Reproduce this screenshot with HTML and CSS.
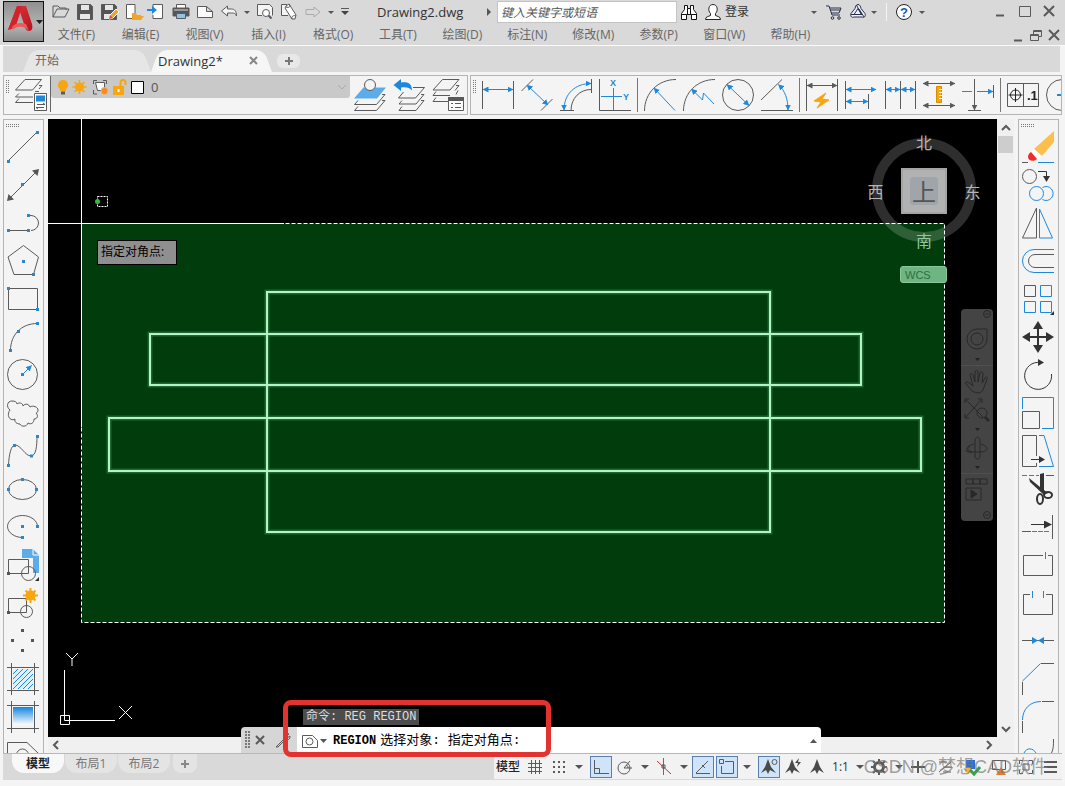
FILE: index.html
```html
<!DOCTYPE html>
<html lang="zh-CN">
<head>
<meta charset="utf-8">
<title>Drawing2.dwg</title>
<link rel="stylesheet" href="styles.css">
</head>
<body>
<svg class="defs" aria-hidden="true">
  <defs>
    <marker id="ab" viewBox="0 0 6 6" refX="5.5" refY="3" markerWidth="6" markerHeight="6" markerUnits="userSpaceOnUse" orient="auto-start-reverse"><path d="M0 0L6 3L0 6Z" fill="#1e88dc" stroke="none"/></marker>
    <marker id="ag" viewBox="0 0 6 6" refX="5.5" refY="3" markerWidth="6" markerHeight="6" markerUnits="userSpaceOnUse" orient="auto-start-reverse"><path d="M0 0L6 3L0 6Z" fill="#5a5a5a" stroke="none"/></marker>
    <marker id="ak" viewBox="0 0 8 8" refX="7" refY="4" markerWidth="8" markerHeight="8" markerUnits="userSpaceOnUse" orient="auto-start-reverse"><path d="M0 0L8 4L0 8Z" fill="#333" stroke="none"/></marker>
    <linearGradient id="fade" x1="0" y1="0" x2="0" y2="1"><stop offset="0" stop-color="#1484de"/><stop offset="1" stop-color="#fff"/></linearGradient>
    <linearGradient id="logo" x1="0" y1="0" x2="1" y2="1"><stop offset="0" stop-color="#e8333a"/><stop offset="1" stop-color="#b3161f"/></linearGradient>
  </defs>
</svg>

<header class="head">
  <button class="app" aria-label="应用程序菜单">
    <svg width="38" height="38" viewBox="0 0 38 38"><g stroke="none"><path d="M12 3h9l6 18c1 4 0 7-3 7-3 0-4-3-5-7l-4-12-5 16-7 2z" fill="url(#logo)"/><path d="M3 27L12 3h5l-6 20z" fill="#d2232b"/><path d="M7 24c3-4 9-5 14-3l3 7c-5-5-11-6-17-1z" fill="#ec5a58"/><path d="M31 17h7l-3.500 4z" fill="#222"/></g></svg>
  </button>
  <div class="head-rows">
    <div class="title-row">
      <div class="quick">
        <button class="q" aria-label="打开"><svg width="24" height="24" viewBox="0 0 24 24"><path d="M4 17V6h5l2 2h6v2M4 17h12l4-8H8z"/></svg></button>
        <button class="q" aria-label="保存"><svg width="24" height="24" viewBox="0 0 24 24"><path d="M4.500 4.500h13l2 2v13h-15z" fill="#555"/><path d="M8 5h8v5H8zM7 14h10v5H7z" fill="#e6e6e6" stroke="none"/></svg></button>
        <button class="q" aria-label="另存为"><svg width="24" height="24" viewBox="0 0 24 24"><path d="M4.500 4.500h13l2 2v13h-15z" fill="#555"/><path d="M8 5h8v5H8zM7 14h6v5H7z" fill="#e6e6e6" stroke="none"/><path d="M12 19l1-4 6-6 3 3-6 6z" fill="#f0a62c" stroke="#fff"/><path d="M12 19l1-4 3 3z" fill="#e0463c" stroke="none"/></svg></button>
        <button class="q" aria-label="从移动端打开"><svg width="24" height="24" viewBox="0 0 24 24"><path d="M14 13V4.500H5.500v14H12" fill="#fff"/><path d="M11 19v-6h4l1 2h4v1l3 0-3 4h-9z" fill="#f0a62c" stroke="none"/></svg></button>
        <button class="q" aria-label="保存到移动端"><svg width="24" height="24" viewBox="0 0 24 24"><path d="M8 9V4.500h9.500v14H8V15" fill="#fff"/><path d="M2 9h5V6l5 4-5 4v-3H2z" fill="#1e88dc" stroke="none"/></svg></button>
        <button class="q" aria-label="打印"><svg width="24" height="24" viewBox="0 0 24 24"><path d="M7.500 8V4.500h9V8" fill="#fff"/><path d="M4 8h16v8H4z" fill="#555"/><path d="M5 10h14" stroke="#ddd"/><path d="M7.500 13.500h9v5h-9z" fill="#8cc4ef"/></svg></button>
        <button class="q" aria-label="新建"><svg width="24" height="24" viewBox="0 0 24 24"><path d="M4.500 6.500h9l6 5v6h-15z M13.500 6.500v5h6" fill="#fafafa"/></svg></button>
        <button class="q" aria-label="放弃"><svg width="24" height="24" viewBox="0 0 24 24"><path d="M4.500 11l6-5v3h4c3 0 5 2 5 7-1-3-3-3-5-3h-4v3z" fill="#f4f4f4"/></svg></button>
        <button class="q q-caret" aria-label="放弃列表"><i class="caret"></i></button>
        <button class="q" aria-label="打印预览"><svg width="24" height="24" viewBox="0 0 24 24"><path d="M9 15.500H4.500v-11h12l3 3v8" fill="#f4f4f4"/><circle cx="13" cy="13" r="3.500" fill="#fff"/><path d="M15.500 15.500l3 3" stroke-width="2"/></svg></button>
        <button class="q" aria-label="批处理打印"><svg width="24" height="24" viewBox="0 0 24 24"><path d="M11 15.500H4.500v-11H10" fill="#f4f4f4"/><path d="M9 6l3-2 7 11-1 4h-3L8 8z" fill="#fff"/><path d="M12 4c2 3 0 4-3 3M15 19c-1-3 2-4 4-3"/></svg></button>
        <button class="q" aria-label="重做"><svg width="24" height="24" viewBox="0 0 24 24"><path d="M5 9.500h8V7l6 5-6 5v-2.500H5z" stroke="#aaa"/></svg></button>
        <button class="q q-caret" aria-label="重做列表"><i class="caret"></i></button>
        <button class="q q-more" aria-label="自定义快速访问"><svg width="10" height="8" viewBox="0 0 10 8"><path d="M1 .5h8" /><path d="M1 3h8l-4 4z" fill="#444" stroke="none"/></svg></button>
      </div>
      <h1 class="doc">Drawing2.dwg</h1>
      <div class="info">
        <svg class="tri" width="12" height="12" viewBox="0 0 12 12"><path d="M4 2l4 4-4 4z" fill="#555" stroke="none"/></svg>
        <input class="search" type="text" placeholder="键入关键字或短语" aria-label="搜索">
        <button class="q" aria-label="查找"><svg width="24" height="24" viewBox="0 0 24 24"><g stroke="#111"><path d="M7.500 5.500h3v3h3v-3h3v4l3 4v6h-5v-5h-5v5h-5v-6l3-4zM4.500 14.500h5M14.500 14.500h5M10.500 8.500v6M13.500 8.500v6" fill="#fff"/></g></svg></button>
        <button class="login"><svg width="24" height="24" viewBox="0 0 24 24"><g stroke="#222"><path d="M4.500 19.500c0-3 3-3 5-4v-2c-3-3-2-9 2.500-9s5.500 6 2.500 9v2c2 1 5 1 5 4z" fill="#fff"/></g></svg>登录</button>
        <button class="q q-caret" aria-label="账户列表"><i class="caret"></i></button>
        <button class="q cart" aria-label="应用商店"><svg width="24" height="24" viewBox="0 0 24 24"><g stroke="#26304a"><path d="M4 6h3l3 9h8M8 8h11l-2 5H9M8.500 10h10"/><circle cx="10.500" cy="18" r="1.300"/><circle cx="17" cy="18" r="1.300"/></g></svg></button>
        <button class="q q-tight" aria-label="联机"><svg width="20" height="24" viewBox="2 0 20 24"><g stroke="#26304a"><path d="M12 4.500c2 0 2.500 2 3 4l4 5c1 3-1 4.500-3 3.500H8c-2 1-4-.5-3-3.500l4-5c.5-2 1-4 3-4z" fill="#eef"/><path d="M12 8.500l-4 6h8zM10.500 5l4.500 9M5 14.500h8M18 17l-5-8"/></g></svg></button>
        <button class="q q-caret" aria-label="联机列表"><i class="caret"></i></button>
        <span class="bar"></span>
        <button class="q" aria-label="帮助"><svg width="24" height="24" viewBox="0 0 24 24"><circle cx="12" cy="12" r="7.500" fill="#fff" stroke="#222"/><text x="12" y="17" class="qm">?</text></svg></button>
        <button class="q q-caret" aria-label="帮助列表"><i class="caret"></i></button>
      </div>
      <div class="win">
        <button aria-label="最小化"><svg width="25" height="22" viewBox="0 0 25 22"><path d="M8 14.500h8" stroke-width="2"/></svg></button>
        <button aria-label="最大化"><svg width="25" height="22" viewBox="0 0 25 22"><path d="M6.500 5.500h11v10h-11z"/></svg></button>
        <button aria-label="关闭"><svg width="25" height="22" viewBox="0 0 25 22"><path d="M6 5l10 10M16 5L6 15" stroke-width="2"/></svg></button>
      </div>
    </div>
    <nav class="menus">
      <button>文件(F)</button><button>编辑(E)</button><button>视图(V)</button><button>插入(I)</button><button>格式(O)</button><button>工具(T)</button><button>绘图(D)</button><button>标注(N)</button><button>修改(M)</button><button>参数(P)</button><button>窗口(W)</button><button>帮助(H)</button>
      <div class="docwin">
        <button aria-label="最小化图形"><svg width="18" height="20" viewBox="0 0 18 20"><path d="M5 15.500h8" stroke-width="2"/></svg></button>
        <button aria-label="还原图形"><svg width="18" height="20" viewBox="0 0 18 20"><path d="M3.500 9.500h8v6h-8zM6.500 9V5.500h8v6H12M3.500 10.500h8M6.500 6.500h8"/></svg></button>
        <button aria-label="关闭图形"><svg width="18" height="20" viewBox="0 0 18 20"><path d="M4 5l10 10M14 5L4 15" stroke-width="2"/></svg></button>
      </div>
    </nav>
  </div>
</header>

<nav class="files">
  <button class="ftab"><span>开始</span></button>
  <button class="ftab ftab-on"><span>Drawing2*</span><svg width="12" height="12" viewBox="0 0 12 12"><path d="M2 2l7 7M9 2L2 9" stroke="#888" stroke-width="2"/></svg></button>
  <button class="fadd" aria-label="新图形"><svg width="12" height="12" viewBox="0 0 12 12"><path d="M6 2v8M2 6h8" stroke="#777" stroke-width="2"/></svg></button>
</nav>

<div class="bars">
  <section class="panel layers" aria-label="图层">
    <span class="grip-v"></span>
    <button class="t" aria-label="图层特性"><svg width="32" height="32" viewBox="0 0 32 32"><path d="M10 .5h16.500l-9 10.500H.5zM24 6.500h3L24 10M4 14.500L.5 18H18M20 12.500h4M4 19.500L.5 23.500H18"/><path d="M19.500 14.500h12v17h-12z" fill="#fff"/><path d="M21 16.500h9v6h-9z" fill="#1e88dc" stroke="none"/><path d="M22 25.500h8l-2-1.500M29 28.500h-8l2 1.500"/></svg></button>
    <div class="combo-col">
      <div class="combo">
        <svg width="96" height="22" viewBox="0 0 96 22">
          <path d="M12 4a5 5 0 0 1 3 9v2H9v-2a5 5 0 0 1 3-9z" fill="#f7a60f" stroke="none"/><path d="M10 17h4" stroke-width="3"/>
          <g stroke="#f7a60f"><circle cx="28.500" cy="11" r="4.500" fill="#f7a60f" stroke="none"/><path d="M28.500 4v14M21.500 11h14M23.500 6l10 10M33.500 6l-10 10" stroke-width="1.500"/></g>
          <path d="M42.500 8V4.500H46M52 4.500h3.500V8M42.500 14v4H46" /><path d="M44.500 6.500h9v8h-7z" fill="#fff"/><circle cx="53.500" cy="15" r="3.500" fill="#f38c22" stroke="#f5b36b"/>
          <path d="M62 10h11v9H62z" fill="#f7a60f" stroke="none"/><path d="M69.500 10V7c0-4 5-4 5 0v2" stroke="#f7a60f" stroke-width="2"/><path d="M67.500 13v3" stroke="#fff" stroke-width="2"/>
          <path d="M80.500 5.500h12v12h-12z" fill="#fff" stroke="#000"/>
        </svg>
        <select class="layer" aria-label="当前图层"><option>0</option></select>
        <svg class="chev" width="12" height="8" viewBox="0 0 12 8"><path d="M2 2l4 4 4-4" stroke="#aaa"/></svg>
      </div>
    </div>
    <button class="t" aria-label="置为当前"><svg width="32" height="32" viewBox="0 0 32 32"><path d="M9.500 8.500H32l-9 11H0z" fill="#5caceb" stroke="none"/><circle cx="16" cy="6" r="5.500" fill="#f4f4f4"/><path d="M4 21.500L.5 25.500H22.500L31 15.500h-3M4 27.500L.5 31.500H22.500L31 21.500h-3"/></svg></button>
    <button class="t" aria-label="上一个图层"><svg width="32" height="32" viewBox="0 0 32 32"><path d="M20 8.500h11.500l-9 10.500H5.500l5-6M9 21.500l-3 3.500h17l8-9.500h-3M9 27.500l-3 4h17l8-10h-3"/><path d="M.5 6L8 0v3.500c7-1 11 1 11 8-3-3.500-6-3.500-11-3V12z" fill="#1e88dc" stroke="none"/></svg></button>
    <button class="t" aria-label="图层状态"><svg width="32" height="32" viewBox="0 0 32 32"><path d="M10.500 .5h16.500l-9 10.500H1zM24 6.500h3l-4 5M4 12.500L1 16.500h17M26 11.500l-2 4M4 18.500l-3 4h15"/><path d="M16.500 18.500h15v13h-15z" fill="#fff"/><path d="M16 20h16" stroke-width="4"/><path d="M19 24.500h2M23 24.500h6M19 28.500h2M23 28.500h6"/></svg></button>
  </section>
  <section class="panel dims" aria-label="标注">
    <span class="grip-v"></span>
    <button class="t" aria-label="线性"><svg width="32" height="32" viewBox="0 0 32 32"><path d="M.5 2v28M31.500 2v28"/><path class="b bb" d="M1 10.500h30"/></svg></button>
    <button class="t" aria-label="对齐"><svg width="32" height="32" viewBox="0 0 32 32"><path d="M.5 12L12 .5M20 31.500L31.500 20"/><path class="b bb" d="M6 6l21 20"/></svg></button>
    <button class="t" aria-label="弧长"><svg width="32" height="32" viewBox="0 0 32 32"><path d="M11 31.500C11 19 20 10.500 31 10.500M31.500 0v14M0 31.500h14"/><path class="b bb" d="M4 31C4 15 15 4.500 31 4.500"/></svg></button>
    <button class="t" aria-label="坐标"><svg width="32" height="32" viewBox="0 0 32 32"><path d="M.5 0v31.500H32"/><path class="b" d="M2 17.500h21M14.500 9v22"/><text x="11" y="7" class="xy">X</text><text x="24" y="21" class="xy">Y</text></svg></button>
    <span class="sep"></span>
    <button class="t" aria-label="半径"><svg width="32" height="32" viewBox="0 0 32 32"><path d="M.5 32C.5 14 14 .5 32 .5"/><path class="b be" d="M31 31.500L10 9"/></svg></button>
    <button class="t" aria-label="折弯"><svg width="32" height="32" viewBox="0 0 32 32"><path d="M.5 32C.5 14 14 .5 32 .5"/><path class="b be" d="M31 25L20.500 14l-1 7L8.500 10"/></svg></button>
    <button class="t" aria-label="直径"><svg width="32" height="32" viewBox="0 0 32 32"><circle cx="16" cy="16" r="15.500"/><path class="b bb" d="M5 5.500l22 21"/></svg></button>
    <button class="t" aria-label="角度"><svg width="32" height="32" viewBox="0 0 32 32"><path d="M0 21L21 .5M0 31.500h32"/><path class="b bb" d="M17.500 5.500C24 12 27 20 27 31"/></svg></button>
    <span class="sep"></span>
    <button class="t" aria-label="快速标注"><svg width="32" height="32" viewBox="0 0 32 32"><path d="M.5 0v32M31.500 0v32"/><path class="gb" d="M1 6.500h30"/><path d="M20 14L8 22l7 1-4 6 12-8-7-1z" fill="#f7a60f" stroke="#f7a60f"/></svg></button>
    <button class="t" aria-label="基线"><svg width="32" height="32" viewBox="0 0 32 32"><path d="M.5 2v28M23.500 15v15"/><path class="b bb" d="M1 10.500h30"/><path class="b bb" d="M1 22.500h22"/></svg></button>
    <button class="t" aria-label="连续"><svg width="32" height="32" viewBox="0 0 32 32"><path d="M1.500 2v28M16.500 2v28M31.500 2v28"/><path class="b bb" d="M2 10.500h14"/><path class="b bb" d="M17 10.500h14"/></svg></button>
    <button class="t" aria-label="等距标注"><svg width="32" height="32" viewBox="0 0 32 32"><path class="gb" d="M0 4.500h32"/><path class="gb" d="M0 26.500h32"/><path d="M13.500 7.500h5v16h-5z" fill="#f7a60f" stroke="#d98c00"/><path d="M16 10.500h3M16 13.500h3M16 16.500h3M16 19.500h3" stroke="#fff"/></svg></button>
    <button class="t" aria-label="折断标注"><svg width="32" height="32" viewBox="0 0 32 32"><path d="M31.500 6v13M6 31.500h13"/><path class="ge" d="M12.500 0v31"/><path class="b" d="M0 12.500h10"/><path class="b be" d="M15 12.500h16"/></svg></button>
    <span class="sep"></span>
    <button class="t" aria-label="公差"><svg width="32" height="32" viewBox="0 0 32 32"><path d="M.5 4.500h31v23H.5zM16.500 4.500v23"/><g stroke="#222"><circle cx="8.500" cy="16" r="5"/><path d="M1.500 16h14M8.500 9v14"/></g><text x="20" y="21" class="tol">.1</text></svg></button>
    <button class="t" aria-label="圆心标记"><svg width="32" height="32" viewBox="0 0 32 32"><circle cx="16" cy="16" r="15.500"/><path class="b" d="M11 16h10M16 11v10" stroke-width="2"/></svg></button>
  </section>
</div>

<main class="work">
  <section class="tools" aria-label="绘图">
    <span class="grip-h"></span>
    <button class="v" aria-label="直线"><svg width="32" height="32" viewBox="0 0 32 32"><path d="M1 30L30 1"/><path class="n" d="M0 30.500h3M29 1.500h3"/></svg></button>
    <button class="v" aria-label="构造线"><svg width="32" height="32" viewBox="0 0 32 32"><path d="M3 29L29 3"/><path d="M0 32l1.500-7 5.500 5.500zM32 0l-7 1.500 5.500 5.500z" fill="#555" stroke="none"/><path class="n" d="M14 15.500h3"/></svg></button>
    <button class="v" aria-label="多段线"><svg width="32" height="32" viewBox="0 0 32 32"><path d="M1 23.500h20M21 8.500h3a7.500 7.500 0 0 1 0 15"/><path class="n" d="M0 23.500h3M20 23.500h3M20 8.500h3"/></svg></button>
    <button class="v" aria-label="多边形"><svg width="32" height="32" viewBox="0 0 32 32"><path d="M16.500 .5l15 11.500-5 17.500H7L1 12z"/><path class="n" d="M15 16.500h3M25 29.500h3"/></svg></button>
    <button class="v" aria-label="矩形"><svg width="32" height="32" viewBox="0 0 32 32"><path d="M1.500 5.500h29v21h-29z"/><path class="n" d="M0 5.500h3M29 26.500h3"/></svg></button>
    <button class="v" aria-label="圆弧"><svg width="32" height="32" viewBox="0 0 32 32"><path d="M3.500 29.500C3.500 14 14 2.500 30.500 2.500"/><path class="n" d="M2 29.500h3M10 10.500h3M29 2.500h3"/></svg></button>
    <button class="v" aria-label="圆"><svg width="32" height="32" viewBox="0 0 32 32"><circle cx="15.500" cy="15.500" r="15"/><path class="b be" d="M15 16l9.500-9.500"/><path class="n" d="M14 15.500h3"/></svg></button>
    <button class="v" aria-label="修订云线"><svg width="32" height="32" viewBox="0 0 32 32"><path d="M3 13c-4-3-3-9 2-9 3 0 5 1 5 3 2-2 6-1 6 2 2-3 6-2 7 1 3-2 8 0 8 3 0 2-1 3-2 3 3 3 1 6-2 6 0 4-3 6-6 4-1 4-7 4-8 1-3 0-6-2-5-5-5 3-9-4-5-9z"/></svg></button>
    <button class="v" aria-label="样条曲线"><svg width="32" height="32" viewBox="0 0 32 32"><path d="M1.500 30C2 20 4 10 8 10c6 0 10 11 16 11 5 0 6-10 6-20"/><path class="n" d="M0 30.500h3M6 10.500h3M23 21h3M29 1.500h3"/></svg></button>
    <button class="v" aria-label="椭圆"><svg width="32" height="32" viewBox="0 0 32 32"><ellipse cx="15.500" cy="16.500" rx="14" ry="10"/><path class="n" d="M0 16.500h3M14 6.500h3M28 16.500h3"/></svg></button>
    <button class="v" aria-label="椭圆弧"><svg width="32" height="32" viewBox="0 0 32 32"><path d="M30.500 15.500c0-6-7-11-15-11s-15 5-15 11 7 11 15 11"/><path class="n" d="M14 15.500h3M29 15.500h3M14 26.500h3"/></svg></button>
    <button class="v" aria-label="插入块"><svg width="32" height="32" viewBox="0 0 32 32"><path d="M15 0h11l6 6v18h-6V9H15z" fill="#5caceb" stroke="none"/><path d="M26 0v6h6" stroke="#fff"/><path d="M1.500 10.500h20v14h-20z"/><circle cx="21.500" cy="24.500" r="7"/><path d="M32 28v4h-4z" fill="#333" stroke="none"/><path class="k" d="M0 24.500h3"/></svg></button>
    <button class="v" aria-label="创建块"><svg width="32" height="32" viewBox="0 0 32 32"><path d="M1.500 11.500h18v14h-18z"/><circle cx="19.500" cy="24.500" r="6"/><circle cx="23.500" cy="8.500" r="5" fill="#f7a60f" stroke="none"/><path d="M23.500 1v15M16 8.500h15M18.500 3.500l10 10M28.500 3.500l-10 10" stroke="#f7a60f" stroke-width="2"/><path class="k" d="M0 25.500h3"/></svg></button>
    <button class="v" aria-label="点"><svg width="32" height="32" viewBox="0 0 32 32"><path class="k" d="M14 5.500h3M4 15.500h3M24 15.500h3M14 25.500h3"/></svg></button>
    <button class="v" aria-label="图案填充"><svg width="32" height="32" viewBox="0 0 32 32"><path d="M6 6h20v20H6z" fill="#dff0ff" stroke="none"/><path class="b" d="M6 11l5-5M6 16L16 6M6 21L21 6M6 26L26 6M11 26l15-15M16 26l10-10M21 26l5-5"/><path d="M4.500 0v32M27.500 0v32M0 4.500h32M0 27.500h32"/></svg></button>
    <button class="v" aria-label="渐变色"><svg width="32" height="32" viewBox="0 0 32 32"><path d="M6 6h20v18H6z" fill="url(#fade)" stroke="none"/><path d="M4.500 0v32M27.500 0v32M0 4.500h32M0 27.500h32"/></svg></button>
    <button class="v" aria-label="面域"><svg width="32" height="32" viewBox="0 0 32 32"><path d="M.5 32V3.500H20L31 14v18"/><circle cx="15.500" cy="16" r="6"/></svg></button>
  </section>

  <div class="stage">
    <div class="canvas">
      <svg class="drawing" width="100%" height="100%">
        <rect x="33.500" y="104.500" width="863" height="399" fill="#003c0c" stroke="#fff" stroke-dasharray="4 2"/>
        <g class="glow"><rect x="219" y="173" width="503" height="240"/><rect x="102" y="215" width="711" height="51"/><rect x="61" y="299" width="812" height="53"/></g>
        <g class="lines"><rect x="219" y="173" width="503" height="240"/><rect x="102" y="215" width="711" height="51"/><rect x="61" y="299" width="812" height="53"/></g>
        <path d="M33.500 0v308M0 104.500h236" stroke="#fff"/>
        <path d="M49.500 77.500h10v10h-10z" stroke="#fff" stroke-dasharray="2 1"/><circle cx="49.500" cy="82.500" r="2.500" fill="#2fbf3a" stroke="none"/>
      </svg>
      <div class="tip">指定对角点:</div>

      <div class="cube">
        <svg class="ring" width="104" height="104" viewBox="0 0 104 104"><circle cx="52" cy="52" r="47" stroke="#fff" stroke-opacity=".18" stroke-width="10"/></svg>
        <span class="dir north">北</span><span class="dir west">西</span><button class="top"><span>上</span></button><span class="dir east">东</span><span class="dir south">南</span>
      </div>
      <button class="wcs">WCS</button>

      <div class="navbar">
        <svg width="32" height="212" viewBox="0 0 32 212"><g stroke="#282828">
          <circle cx="26" cy="5" r="3.500"/><circle cx="26" cy="206" r="3.500"/><path d="M24 5h4M24 206h4"/>
          <path d="M16 20h10v10a10 10 0 1 1-10-10z"/><circle cx="16" cy="30" r="6"/><path d="M0 56.500h32M0 164.500h32" stroke="#505050"/>
          <path d="M11 82l-6-7c-1-2 1-3 3-1l4 3-3-11c0-2 2-2 3 0l2 7V63c0-2 3-2 3 0v10l2-9c1-2 3-1 3 1l-1 9 3-5c1-2 3-1 2 1l-4 11c-2 4-7 3-11 1z"/>
          <path d="M5 91l17 17M20 91L5 108M4 94v-4h4M17 90h4v4M4 105v4h4"/><circle cx="21" cy="104" r="5"/><path d="M24 108l4 4" stroke-width="3"/>
          <path d="M14 132c0-5 5-5 5 0v15c0 4-5 4-5 0zM13 135c-9 2-9 7 0 8h7c8-1 8-5 0-8M9 137l-4 5 6 2"/>
          <path d="M5 170h7v5H5zM12 170h7v5h-7zM19 170h7v5h-7zM5 179h15v12H5z"/><path d="M10 181l6 4-6 4z" fill="#282828"/></g>
          <path d="M14 49h5l-2.500 3zM14 119h5l-2.500 3zM14 157h5l-2.500 3z" fill="#222" stroke="none"/></svg>
      </div>

      <svg class="ucs" width="76" height="76" viewBox="0 0 76 76"><g stroke="#fff"><path d="M5.500 18v50.500H56M1.500 63.500h9v9h-9zM7 1l6 6 6-6M13 7v7M60 54l13 13M73 54L60 67"/></g></svg>
    </div>
    <div class="vscroll"><svg width="17" height="17" viewBox="0 0 17 17"><path d="M5 11l4-4 4 4" stroke-width="2"/></svg><span class="thumb"></span><svg class="end" width="17" height="17" viewBox="0 0 17 17"><path d="M5 7l4 4 4-4" stroke-width="2"/></svg></div>
    <div class="hscroll"><svg width="17" height="17" viewBox="0 0 17 17"><path d="M10 4L6 8l4 4" stroke-width="2"/></svg><svg class="end" width="17" height="17" viewBox="0 0 17 17"><path d="M7 4l4 4-4 4" stroke-width="2"/></svg></div>

    <div class="command">
      <div class="history">命令: REG REGION</div>
      <div class="cmdline">
        <div class="cmdhead"><span class="cmdgrip"></span><button aria-label="关闭命令行"><svg width="14" height="14" viewBox="0 0 14 14"><path d="M3 3l8 8M11 3l-8 8" stroke-width="2"/></svg></button><button aria-label="自定义"><svg width="16" height="16" viewBox="0 0 16 16"><path d="M1 15l8-8c-1-4 2-6 5-5l-3 3 1 1 3-2c0 3-2 5-5 4l-7 7z"/></svg></button></div>
        <label class="cmdinput"><svg width="26" height="16" viewBox="0 0 26 16"><path d="M1.500 2.500h10l5 5v7h-15z"/><circle cx="8.500" cy="8.500" r="3.500"/><path d="M19 6h7l-3.500 4z" fill="#555" stroke="none"/></svg><b>REGION</b><span>选择对象: 指定对角点:</span><input type="text" aria-label="命令"><svg width="10" height="10" viewBox="0 0 10 10"><path d="M1 7h7L4.500 3z" fill="#555" stroke="none"/></svg></label>
      </div>
      <div class="mark"></div>
    </div>
  </div>

  <section class="tools" aria-label="修改">
    <span class="grip-h"></span>
    <button class="v" aria-label="删除"><svg width="32" height="32" viewBox="0 0 32 32"><path d="M32 0v11L20 25l-8-7z" fill="#fbbf4b" stroke="none"/><path d="M12 18l8 7-4 4-7-8z" fill="#fff" stroke="none"/><path d="M9 21l6 7c-3 3-9 2-9-2 0-2 1-4 3-5z" fill="#f12b2b" stroke="none"/><path d="M0 31.500h6"/><path class="b" d="M16 31.500h16"/></svg></button>
    <button class="v" aria-label="复制"><svg width="32" height="32" viewBox="0 0 32 32"><circle cx="7.500" cy="7.500" r="7"/><path d="M16 2.500h8.500V8" stroke="#333"/><path d="M21 7h7l-3.500 6z" fill="#333" stroke="none"/><g class="b"><circle cx="14.500" cy="24.500" r="7"/><path d="M20.500 18.500a7 7 0 1 1 0 12"/></g></svg></button>
    <button class="v" aria-label="镜像"><svg width="32" height="32" viewBox="0 0 32 32"><path d="M14.500 1v30H.5z"/><path class="b" d="M17.500 2v29h13z"/></svg></button>
    <button class="v" aria-label="偏移"><svg width="32" height="32" viewBox="0 0 32 32"><path d="M32 9.500H13a6.500 6.500 0 0 0 0 13h19"/><path class="b" d="M32 4.500H12a11.500 11.500 0 0 0 0 23h20"/></svg></button>
    <button class="v" aria-label="阵列"><svg width="32" height="32" viewBox="0 0 32 32"><path d="M2.500 2.500h11v11h-11z"/><path class="b" d="M18.500 2.500h11v11h-11zM2.500 18.500h11v11h-11zM18.500 18.500h11v11h-11z"/><path d="M32 28v4h-4z" fill="#333" stroke="none"/></svg></button>
    <button class="v" aria-label="移动"><svg width="32" height="32" viewBox="0 0 32 32"><path d="M16 4v24M4 16h24" stroke="#333" stroke-width="2"/><path d="M16 0l5 8H11zM16 32l5-8H11zM0 16l8-5v10zM32 16l-8-5v10z" fill="#333" stroke="none"/></svg></button>
    <button class="v" aria-label="旋转"><svg width="32" height="32" viewBox="0 0 32 32"><path d="M18 3.500A13.500 13.500 0 1 0 29.500 15" stroke="#333"/><path d="M16 0l6 3.500-6 3.500z" fill="#333" stroke="none"/></svg></button>
    <button class="v" aria-label="缩放"><svg width="32" height="32" viewBox="0 0 32 32"><path class="b" d="M.5 12V.5h31v31H20"/><path d="M.5 14.500h17v17H.5z"/></svg></button>
    <button class="v" aria-label="拉伸"><svg width="32" height="32" viewBox="0 0 32 32"><path d="M14.500 21V.5H.5v31h14V28"/><path class="b" d="M17 .5h5l9.500 31H17"/><path d="M9 24.500h13" stroke="#333"/><path d="M17 21l6 3.500-6 3.500z" fill="#333" stroke="none"/></svg></button>
    <button class="v" aria-label="修剪"><svg width="32" height="32" viewBox="0 0 32 32"><path class="b" d="M0 2.500h17" stroke-dasharray="5 2"/><path d="M24 2.500h8"/><path d="M18 1l4-1v17l4 3-4 2-14-13-1-4 11 9z" fill="#333" stroke="none"/><g stroke="#333" stroke-width="2"><ellipse cx="18" cy="26" rx="3" ry="5"/><ellipse cx="26" cy="22" rx="4" ry="3"/></g></svg></button>
    <button class="v" aria-label="延伸"><svg width="32" height="32" viewBox="0 0 32 32"><path d="M30.500 4v24M0 20.500h9"/><path class="b" d="M10 20.500h18" stroke-dasharray="5 1"/><path class="ke" d="M9 13.500h20" stroke="#333"/></svg></button>
    <button class="v" aria-label="打断于点"><svg width="32" height="32" viewBox="0 0 32 32"><path d="M21 6.500H1.500v20h29v-20H26"/><path class="b" d="M23.500 3v7"/></svg></button>
    <button class="v" aria-label="打断"><svg width="32" height="32" viewBox="0 0 32 32"><path d="M8 7.500H1.500v20h29v-20H24"/><path class="b" d="M10.500 4v7M21.500 4v7"/></svg></button>
    <button class="v" aria-label="合并"><svg width="32" height="32" viewBox="0 0 32 32"><path d="M0 15.500h32"/><path d="M10 12l6 3.500-6 3.500zM22 12l-6 3.500 6 3.500z" fill="#1e88dc" stroke="none"/></svg></button>
    <button class="v" aria-label="倒角"><svg width="32" height="32" viewBox="0 0 32 32"><path d="M.5 32V19M19 .5h13"/><path class="b" d="M.5 18L18.500 .5"/></svg></button>
    <button class="v" aria-label="圆角"><svg width="32" height="32" viewBox="0 0 32 32"><path d="M.5 32V20M20 .5h12"/><path class="b" d="M.5 19C.5 8 8 .5 19 .5"/></svg></button>
    <button class="v" aria-label="光顺曲线"><svg width="32" height="32" viewBox="0 0 32 32"><path class="b" d="M2 14c3-6 9-5 12 0"/><path d="M31.500 0c0 6 0 10-2 14"/></svg></button>
  </section>
</main>

<footer class="status">
  <nav class="layouts">
    <button class="ltab ltab-on">模型</button><button class="ltab">布局1</button><button class="ltab">布局2</button><button class="ladd" aria-label="新建布局"><svg width="12" height="12" viewBox="0 0 12 12"><path d="M6 2v8M2 6h8" stroke="#888" stroke-width="2"/></svg></button>
  </nav>
  <div class="toggles">
    <button class="model">模型</button>
    <button class="s" aria-label="栅格"><svg width="20" height="20" viewBox="0 0 20 20"><path d="M6.500 3v14M10.500 3v14M14.500 3v14M3 6.500h14M3 10.500h14M3 14.500h14"/></svg></button>
    <button class="s" aria-label="捕捉"><svg width="20" height="20" viewBox="0 0 20 20"><path class="dots" d="M4 5h12M4 10h12M4 15h12"/></svg></button>
    <button class="sc" aria-label="捕捉设置"><i class="caret big"></i></button>
    <button class="s on gap" aria-label="正交"><svg width="20" height="20" viewBox="0 0 20 20"><path d="M3.500 3v13.500H18M3.500 11.500h5v5"/></svg></button>
    <button class="s" aria-label="极轴"><svg width="20" height="20" viewBox="0 0 20 20"><circle cx="9" cy="11" r="6"/><path d="M9 11h8M9 11l6-7M13 11c0-2-1-3-2-3"/></svg></button>
    <button class="sc" aria-label="极轴设置"><i class="caret big"></i></button>
    <button class="s" aria-label="等轴测"><svg width="20" height="20" viewBox="0 0 20 20"><path d="M3 4l14 13" stroke="#b33"/><path d="M9.500 1v17" stroke="#3a8a4a"/><path d="M8 8h3v3H8z"/></svg></button>
    <button class="sc" aria-label="等轴测设置"><i class="caret big"></i></button>
    <button class="s on" aria-label="对象捕捉追踪"><svg width="20" height="20" viewBox="0 0 20 20"><path d="M3 16.500h14M3 16L15 4M9 8l3 3"/></svg></button>
    <button class="s on" aria-label="对象捕捉"><svg width="20" height="20" viewBox="0 0 20 20"><path d="M8 4.500h8.500v12h-12V9M2.500 2.500h4v4h-4z"/></svg></button>
    <button class="sc" aria-label="捕捉列表"><i class="caret big"></i></button>
    <button class="s on gap" aria-label="注释可见性"><svg width="20" height="20" viewBox="0 0 20 20"><path class="man" d="M9 2l3 8 5 6-6-3-2 4-2-4-5 3 4-6z"/><circle cx="15.500" cy="5" r="2.500"/></svg></button>
    <button class="s" aria-label="自动缩放"><svg width="20" height="20" viewBox="0 0 20 20"><path class="man" d="M9 2l3 8 5 6-6-3-2 4-2-4-5 3 4-6zM16 1l-4 5h3l-1 4 4-5h-3z"/></svg></button>
    <button class="s" aria-label="注释比例"><svg width="20" height="20" viewBox="0 0 20 20"><path class="man" d="M10 2l3 8 4 6-5-3-2 4-2-4-5 3 4-6z"/></svg></button>
    <button class="ratio">1:1</button>
    <button class="sc" aria-label="比例列表"><i class="caret big"></i></button>
    <button class="s" aria-label="切换工作空间"><svg width="20" height="20" viewBox="0 0 20 20"><circle cx="10" cy="10" r="4.500" stroke-width="3"/><path d="M10 2v3M10 15v3M2 10h3M15 10h3M4 4l3 3M13 13l3 3M16 4l-3 3M4 16l3-3" stroke-width="2"/></svg></button>
    <button class="sc" aria-label="工作空间列表"><i class="caret big"></i></button>
    <button class="s" aria-label="注释监视器"><svg width="20" height="20" viewBox="0 0 20 20"><path d="M10 4v12M3 10h14" stroke-width="2"/></svg></button>
    <button class="s gap" aria-label="隔离对象"><svg width="20" height="20" viewBox="0 0 20 20"><path d="M4 15L16 5M4 5h8M8 10h9M8 15h8"/></svg></button>
    <button class="s gap" aria-label="硬件加速"><svg width="20" height="20" viewBox="0 0 20 20"><path d="M4 3h9v9H4z" fill="#2d6fd2" stroke="none"/><circle cx="6" cy="13" r="3" fill="#f7b52a" stroke="none"/><path d="M8 13l4 4 6-7" stroke="#2fa544" stroke-width="3"/></svg></button>
    <button class="s gap" aria-label="图形性能"><svg width="20" height="20" viewBox="0 0 20 20"><path d="M3.500 3.500h13v9h-13z"/><path d="M12 10l5 8H7z" fill="#ea7a23" stroke="none"/></svg></button>
    <button class="s gap" aria-label="全屏显示"><svg width="20" height="20" viewBox="0 0 20 20"><path d="M3.500 7V3.500H7M13 3.500h3.500V7M3.500 13v3.500H7M13 16.500h3.500V13M7 7h6v6H7z"/></svg></button>
    <button class="s" aria-label="自定义"><svg width="20" height="20" viewBox="0 0 20 20"><path d="M4 5h13M4 10h13M4 15h13" stroke-width="2"/></svg></button>
    <span class="credit">CSDN @梦想CAD软件</span>
  </div>
</footer>
</body>
</html>
```
FILE: styles.css
```css
* { box-sizing: border-box; }
body {
  margin: 0;
  height: 100vh;
  display: flex;
  flex-direction: column;
  overflow: hidden;
  background: #f4f4f4;
  color: #333;
  font: 12px/16px "Open Sans", "Noto Sans CJK SC", sans-serif;
}
button, input, select {
  font: inherit;
  color: inherit;
  border: 0;
  padding: 0;
  margin: 0;
  background: none;
}
button { display: flex; align-items: center; justify-content: center; flex: none; white-space: nowrap; }
svg { fill: none; stroke: #5a5a5a; flex: none; display: block; }
svg text { stroke: none; }
.defs { position: absolute; width: 0; height: 0; }

/* icon strokes */
.b { stroke: #1e88dc; }
.bb { marker-start: url(#ab); marker-end: url(#ab); }
.be { marker-end: url(#ab); }
.gb { marker-start: url(#ag); marker-end: url(#ag); }
.ge { marker-end: url(#ag); }
.ke { marker-end: url(#ak); }
.n { stroke: #2f86c5; stroke-width: 3; }
.k { stroke: #555; stroke-width: 3; }
.man { fill: #4a4a4a; stroke: none; }
.dots { stroke-width: 2; stroke-dasharray: 2 3; }
.xy { font: bold 9px "Liberation Sans", sans-serif; fill: #1e88dc; }
.tol { font: bold 13px "Liberation Sans", sans-serif; fill: #222; }
.qm { font: bold 13px "Liberation Sans", sans-serif; fill: #2456b8; text-anchor: middle; }

.caret {
  border: 3px solid transparent;
  border-top-color: #555;
  border-bottom: 0;
}
.big { border-width: 4px; border-bottom: 0; }

/* header */
.head { display: flex; background: #d9d9d9; border-bottom: 1px solid #fafafa; height: 46px; flex: none; }
.app {
  width: 41px;
  height: 41px;
  margin: 1px 5px 0 3px;
  border: 1px solid #111;
  background: linear-gradient(#8f8f8f, #b5b5b5 60%, #8b8b8b);
}
.head-rows { flex: 1; min-width: 0; }
.title-row { display: flex; height: 24px; align-items: center; padding-right: 2px; }
.quick, .info, .win { display: flex; align-items: center; flex: none; }
.q { width: 24px; height: 24px; }
.q-caret { width: 12px; }
.q-more { width: 16px; }
.q-tight { width: 20px; margin-left: 2px; }
.cart { margin-left: 2px; }
.doc { flex: 1; min-width: 0; margin: 0; padding-left: 24px; font-size: 13px; font-weight: 400; line-height: 22px; color: #333; }
.tri { margin-right: 2px; }
.search {
  width: 180px;
  height: 22px;
  background: #fff;
  border: 1px solid #c4c4c4;
  padding: 0 3px;
  font-style: italic;
}
.search::placeholder { color: #555; opacity: 1; }
.login { margin-right: 59px; color: #333; }
.bar { width: 1px; height: 18px; background: #f4f4f4; margin: 0 5px 0 6px; }
.win { padding-left: 60px; }
.menus { display: flex; gap: 25px; height: 22px; padding: 0 2px 0 8px; align-items: center; color: #666; }
.menus > button { min-width: 39px; }
.docwin { display: flex; margin-left: auto; }

/* file tabs */
.files { display: flex; flex: none; height: 26px; margin: 0 5px 0 3px; padding: 4px 0 0 24px; background: #d9d9d9; }
.ftab { position: relative; z-index: 0; width: 120px; height: 22px; justify-content: flex-start; padding-left: 8px; font-size: 12px; color: #666; }
.ftab::before, .ftab::after {
  content: "";
  position: absolute;
  z-index: -1;
  inset: 0 50% 0 0;
  background: #e6e6e6;
  border-radius: 8px 0 0 0;
  transform: skewX(-20deg);
}
.ftab::after { inset: 0 0 0 40%; border-radius: 0 8px 0 0; transform: skewX(20deg); }
.ftab-on { color: #333; width: 113px; margin-left: 8px; padding: 0 8px 0 3px; justify-content: space-between; font-size: 13px; }
.ftab-on::before, .ftab-on::after { background: #f6f6f6; }
.fadd { width: 23px; height: 14px; margin: 4px 0 0 9px; background: #e8e8e8; border-radius: 6px; }

/* top toolbars */
.bars { display: flex; gap: 2px; height: 40px; margin: 3px 3px 4px; flex: none; }
.panel { display: flex; align-items: flex-start; border: 1px solid #b4b4b4; background: #f4f4f4; overflow: hidden; }
.grip-v, .grip-h {
  flex: none;
  background: linear-gradient(#f4f4f4 50%, transparent 50%) 0 0 / 2px 2px, linear-gradient(90deg, #777 50%, transparent 50%) 0 0 / 2px 2px;
}
.grip-v { width: 4px; height: 14px; margin: 3px 1px 0 2px; }
.grip-h { width: 14px; height: 4px; margin: 3px 0 1px 3px; }
.t { width: 39px; height: 38px; }
.layers { flex: none; }
.combo-col { width: 300px; height: 36px; border-left: 1px solid #666; }
.combo { display: flex; align-items: center; height: 22px; background: #c9c9c9; border-radius: 0 0 3px 3px; }
.layer { flex: 1; appearance: none; padding-left: 4px; color: #555; font-size: 13px; }
.chev { margin-right: 2px; }
.dims { flex: 1; min-width: 0; }
.sep { flex: none; width: 1px; height: 34px; margin: 2px 2px 0 3px; background: #777; }

/* work area */
.work { flex: 1; min-height: 0; display: flex; gap: 4px; padding: 0 6px 0 3px; }
.tools { width: 41px; flex: none; border: 1px solid #b4b4b4; border-bottom: 0; padding-right: 1px; display: flex; flex-direction: column; overflow: hidden; }
.tools .grip-h { margin-left: 2px; }
.v { height: 38px; }
.stage { position: relative; flex: 1; min-width: 0; display: grid; grid-template: 1fr 16px / 1fr 17px; background: #f0f0f0; }
.canvas { position: relative; background: #000; overflow: hidden; }
.drawing { position: absolute; inset: 0; }
.glow { stroke: #2a7a40; stroke-width: 5; stroke-opacity: .7; }
.lines { stroke: #b4f2c8; stroke-width: 2; }
.tip { position: absolute; left: 49px; top: 121px; padding: 3px 12px 4px 3px; background: #8f8f8f; border: 1px solid #000; color: #000; }
.cube {
  position: absolute;
  right: 12px;
  top: 11px;
  display: grid;
  grid-template: 24px 74px 24px / 25px 72px 25px;
  place-items: center;
  color: #b5b5b5;
  font: bold 16px/20px "Noto Sans CJK SC", sans-serif;
}
.cube .ring { position: absolute; left: 9px; top: 8px; }
.dir { z-index: 1; font-weight: 400; }
.north, .south { grid-column: 1 / -1; }
.south { color: #8fc7a0; }
.top { width: 46px; height: 46px; background: #b2b2b2; border: 2px solid #a4a4a4; color: #555; font-weight: 400; font-size: 24px; z-index: 1; }
.top span { width: 28px; line-height: 28px; background: #a0a5ab; border-radius: 3px; }
.wcs { position: absolute; right: 50px; top: 147px; width: 47px; height: 17px; padding-left: 4px; justify-content: flex-start; background: #6fb583; border: 1px solid #8cc79c; border-radius: 3px; color: #2c6e40; font: 11px "Liberation Sans", sans-serif; }
.navbar { position: absolute; right: 4px; top: 190px; background: #444; border-radius: 4px; }
.ucs { position: absolute; left: 11px; bottom: 9px; }
.vscroll { display: flex; flex-direction: column; }
.thumb { height: 17px; margin: 0 1px; background: #cdcdcd; }
.vscroll .end { margin-top: auto; }
.hscroll { display: flex; }
.hscroll .end { margin-left: auto; }

/* command line */
.command { position: absolute; left: 193px; bottom: 0; width: 60%; z-index: 2; }
.history { width: max-content; margin: 0 0 2px 62px; padding: 0 3px; background: #4c4c4c; color: #ddd; font: 12px/16px "Liberation Mono", "Noto Sans CJK SC", monospace; }
.cmdline { display: flex; height: 26px; }
.cmdhead { display: flex; align-items: center; gap: 8px; width: 56px; padding-left: 4px; background: #d6d6d6; border-radius: 4px 0 0 0; }
.cmdhead button:first-of-type { margin-left: -6px; }
.cmdgrip { width: 6px; height: 18px; background: radial-gradient(circle at 1px 1px, #777 0 0.7px, transparent 1px) 0 0 / 3px 3px; }
.cmdinput { flex: 1; min-width: 0; display: flex; align-items: center; padding: 2px 2px 0 4px; background: #fff; border-radius: 0 4px 0 0; color: #000; font: 13px/16px "Liberation Mono", "Noto Sans CJK SC", monospace; }
.cmdinput b { margin: 0 4px 0 6px; font-size: 12px; }
.cmdinput span { white-space: nowrap; }
.cmdinput input { flex: 1; min-width: 0; }
.mark { position: absolute; left: 42px; bottom: -4px; width: 268px; height: 57px; border: 5px solid #e23330; border-radius: 8px; }

/* status bar */
.status { display: flex; justify-content: space-between; flex: none; height: 27px; margin: 0 3px 6px; background: #d9d9d9; border-top: 1px solid #b8b8b8; }
.layouts { display: flex; gap: 1px; padding-left: 9px; }
.ltab { height: 19px; width: 52px; background: #e4e4e4; border-radius: 0 0 12px 12px; color: #777; }
.ltab-on { background: #f8f8f8; color: #222; font-weight: 700; }
.ladd { width: 24px; height: 19px; margin-left: 2px; background: #e4e4e4; border-radius: 0 0 8px 8px; }
.toggles { position: relative; display: flex; align-items: center; background: #f2f2f2; margin-bottom: 1px; }
.model { width: 28px; margin-right: 1px; color: #222; font-weight: 500; }
.s { width: 22px; height: 22px; margin: 0 1px; border: 1px solid transparent; }
.sc { width: 15px; height: 22px; }
.gap { margin-left: 4px; }
.on { background: #cfe4f8; border-color: #5b7fae; }
.ratio { width: 23px; }
.credit { position: absolute; right: 14px; top: 0; color: rgba(120, 120, 120, .7); font: 18px/26px "Liberation Sans", "Noto Sans CJK SC", sans-serif; white-space: nowrap; }
```
